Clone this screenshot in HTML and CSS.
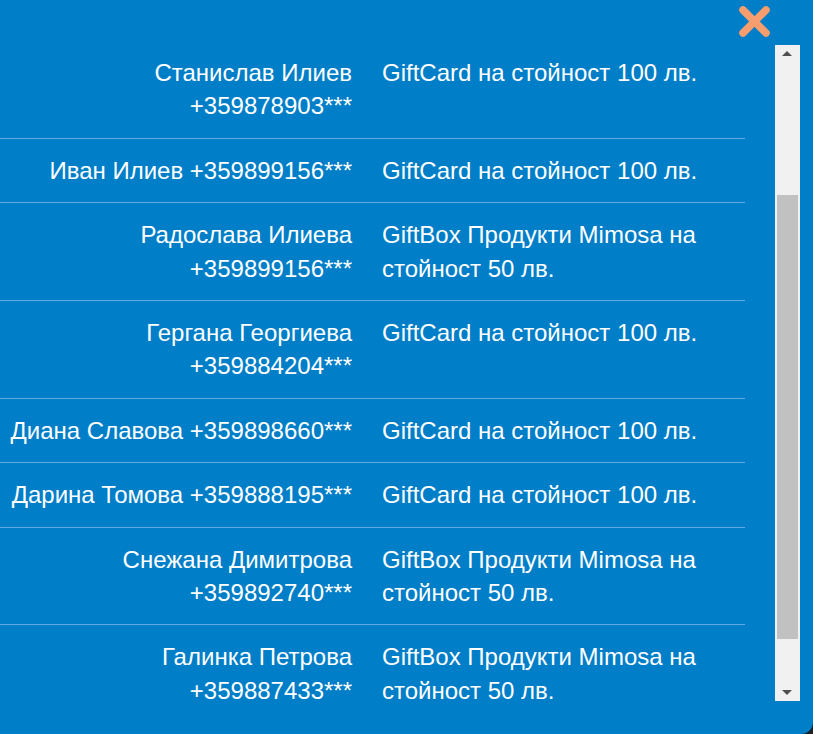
FILE: index.html
```html
<!DOCTYPE html>
<html lang="bg">
<head>
<meta charset="utf-8">
<title>Победители</title>
<link rel="stylesheet" href="styles.css">
</head>
<body>
<div class="panel">
  <div class="header">
    <button class="close" aria-label="Затвори">
      <svg width="33" height="33" viewBox="0 0 33 33"><line x1="5" y1="5" x2="28" y2="28"/><line x1="28" y1="5" x2="5" y2="28"/></svg>
    </button>
  </div>
  <div class="body">
    <div class="list">
      <div class="row"><div class="name">Станислав Илиев +359878903***</div><div class="prize">GiftCard на стойност 100 лв.</div></div>
      <div class="row"><div class="name">Иван Илиев +359899156***</div><div class="prize">GiftCard на стойност 100 лв.</div></div>
      <div class="row"><div class="name">Радослава Илиева +359899156***</div><div class="prize">GiftBox Продукти Mimosa на стойност 50 лв.</div></div>
      <div class="row"><div class="name">Гергана Георгиева +359884204***</div><div class="prize">GiftCard на стойност 100 лв.</div></div>
      <div class="row"><div class="name">Диана Славова +359898660***</div><div class="prize">GiftCard на стойност 100 лв.</div></div>
      <div class="row"><div class="name">Дарина Томова +359888195***</div><div class="prize">GiftCard на стойност 100 лв.</div></div>
      <div class="row"><div class="name">Снежана Димитрова +359892740***</div><div class="prize">GiftBox Продукти Mimosa на стойност 50 лв.</div></div>
      <div class="row"><div class="name">Галинка Петрова +359887433***</div><div class="prize">GiftBox Продукти Mimosa на стойност 50 лв.</div></div>
    </div>
    <div class="scrollbar">
      <div class="sb-btn"><span class="arrow-up"></span></div>
      <div class="sb-track"><div class="sb-thumb"></div></div>
      <div class="sb-btn"><span class="arrow-down"></span></div>
    </div>
  </div>
</div>
</body>
</html>
```
FILE: styles.css
```css
html, body {
  margin: 0;
  padding: 0;
  background: #1b2126;
  width: 813px;
  height: 734px;
  overflow: hidden;
}
.panel {
  width: 813px;
  height: 734px;
  background: #007ec8;
  border-bottom-right-radius: 12px;
  font-family: "Liberation Sans", Arial, sans-serif;
  color: #ffffff;
  overflow: hidden;
}
.header {
  height: 41px;
  display: flex;
  justify-content: flex-end;
  align-items: flex-start;
  padding-right: 42px;
}
.close {
  margin-top: 5px;
  width: 33px;
  height: 33px;
  padding: 0;
  border: 0;
  background: none;
  cursor: pointer;
  display: block;
}
.close svg {
  display: block;
}
.close line {
  stroke: #f89e6e;
  stroke-width: 7.5;
  stroke-linecap: round;
}
.body {
  display: flex;
  align-items: flex-start;
  gap: 30px;
}
.list {
  width: 745px;
}
.row {
  display: grid;
  grid-template-columns: 367px 378px;
  border-bottom: 1px solid #60ace2;
  font-size: 24px;
  line-height: 33.4px;
}
.row:last-child {
  border-bottom: 0;
}
.name {
  text-align: right;
  padding: 15px 15px 15px 0;
}
.prize {
  text-align: left;
  padding: 15px 15px;
}
.scrollbar {
  margin-top: 4px;
  width: 25px;
  height: 656px;
  background: #f1f1f1;
  display: flex;
  flex-direction: column;
}
.sb-btn {
  height: 17px;
  display: flex;
  align-items: center;
  justify-content: center;
}
.arrow-up {
  width: 0;
  height: 0;
  border-left: 5px solid transparent;
  border-right: 5px solid transparent;
  border-bottom: 5px solid #505050;
  margin-left: -1px;
}
.arrow-down {
  width: 0;
  height: 0;
  border-left: 5px solid transparent;
  border-right: 5px solid transparent;
  border-top: 5px solid #505050;
  margin-left: -1px;
}
.sb-track {
  flex: 1;
  padding: 0 2px;
}
.sb-thumb {
  margin-top: 133px;
  height: 444px;
  background: #c1c1c1;
}
```
